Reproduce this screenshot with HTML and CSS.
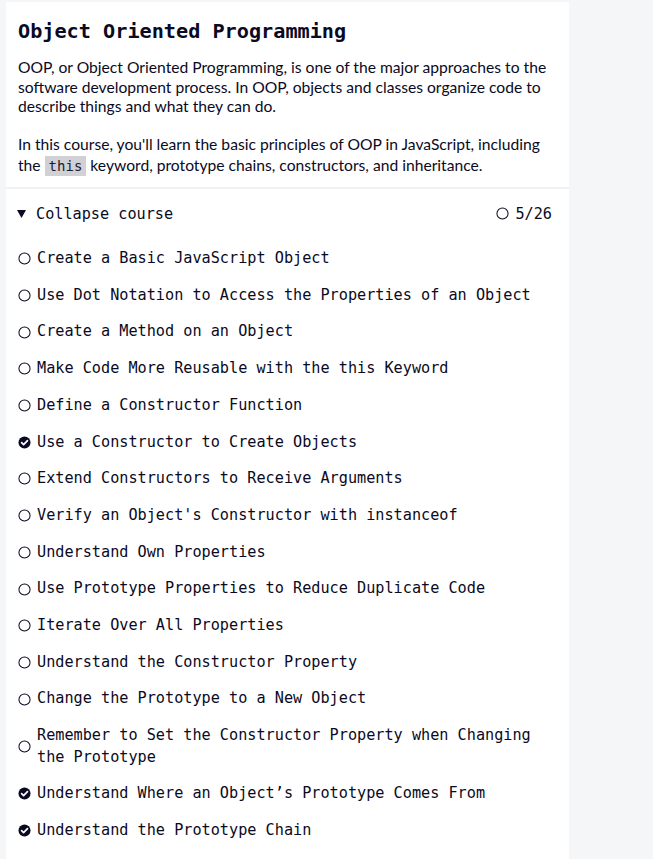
FILE: index.html
```html
<!DOCTYPE html>
<html lang="en">
<head>
<meta charset="utf-8">
<title>Object Oriented Programming</title>
<link rel="stylesheet" href="styles.css">
</head>
<body>
<div class="panel">
  <div class="intro">
    <h1 class="title">Object Oriented Programming</h1>
    <p class="desc">OOP, or Object Oriented Programming, is one of the major approaches to the software development process. In OOP, objects and classes organize code to describe things and what they can do.</p>
    <p class="desc desc-code">In this course, you'll learn the basic principles of OOP in JavaScript, including the <code class="kw">this</code> keyword, prototype chains, constructors, and inheritance.</p>
  </div>
  <div class="divider"></div>
  <div class="collapse-row">
    <span class="collapse-label"><svg class="tri" viewBox="0 0 9 8"><path d="M0 0 H9 L4.5 8 Z" fill="#0a0a23"/></svg>Collapse course</span>
    <span class="progress"><svg class="ico" viewBox="0 0 14 14"><circle cx="7" cy="7" r="6" fill="none" stroke="#0a0a23" stroke-width="1.1"/></svg> 5/26</span>
  </div>
  <ul class="steps">
    <li class="step"><svg class="ico" viewBox="0 0 14 14"><circle cx="7" cy="7" r="6" fill="none" stroke="#0a0a23" stroke-width="1.1"/></svg><span>Create a Basic JavaScript Object</span></li>
    <li class="step"><svg class="ico" viewBox="0 0 14 14"><circle cx="7" cy="7" r="6" fill="none" stroke="#0a0a23" stroke-width="1.1"/></svg><span>Use Dot Notation to Access the Properties of an Object</span></li>
    <li class="step"><svg class="ico" viewBox="0 0 14 14"><circle cx="7" cy="7" r="6" fill="none" stroke="#0a0a23" stroke-width="1.1"/></svg><span>Create a Method on an Object</span></li>
    <li class="step"><svg class="ico" viewBox="0 0 14 14"><circle cx="7" cy="7" r="6" fill="none" stroke="#0a0a23" stroke-width="1.1"/></svg><span>Make Code More Reusable with the this Keyword</span></li>
    <li class="step"><svg class="ico" viewBox="0 0 14 14"><circle cx="7" cy="7" r="6" fill="none" stroke="#0a0a23" stroke-width="1.1"/></svg><span>Define a Constructor Function</span></li>
    <li class="step"><svg class="ico" viewBox="0 0 14 14"><circle cx="7" cy="7" r="6.5" fill="#0a0a23"/><path d="M3.9 7.2 L6 9.2 L10.2 4.9" fill="none" stroke="#fff" stroke-width="1.8" stroke-linecap="round" stroke-linejoin="round"/></svg><span>Use a Constructor to Create Objects</span></li>
    <li class="step"><svg class="ico" viewBox="0 0 14 14"><circle cx="7" cy="7" r="6" fill="none" stroke="#0a0a23" stroke-width="1.1"/></svg><span>Extend Constructors to Receive Arguments</span></li>
    <li class="step"><svg class="ico" viewBox="0 0 14 14"><circle cx="7" cy="7" r="6" fill="none" stroke="#0a0a23" stroke-width="1.1"/></svg><span>Verify an Object's Constructor with instanceof</span></li>
    <li class="step"><svg class="ico" viewBox="0 0 14 14"><circle cx="7" cy="7" r="6" fill="none" stroke="#0a0a23" stroke-width="1.1"/></svg><span>Understand Own Properties</span></li>
    <li class="step"><svg class="ico" viewBox="0 0 14 14"><circle cx="7" cy="7" r="6" fill="none" stroke="#0a0a23" stroke-width="1.1"/></svg><span>Use Prototype Properties to Reduce Duplicate Code</span></li>
    <li class="step"><svg class="ico" viewBox="0 0 14 14"><circle cx="7" cy="7" r="6" fill="none" stroke="#0a0a23" stroke-width="1.1"/></svg><span>Iterate Over All Properties</span></li>
    <li class="step"><svg class="ico" viewBox="0 0 14 14"><circle cx="7" cy="7" r="6" fill="none" stroke="#0a0a23" stroke-width="1.1"/></svg><span>Understand the Constructor Property</span></li>
    <li class="step"><svg class="ico" viewBox="0 0 14 14"><circle cx="7" cy="7" r="6" fill="none" stroke="#0a0a23" stroke-width="1.1"/></svg><span>Change the Prototype to a New Object</span></li>
    <li class="step"><svg class="ico" viewBox="0 0 14 14"><circle cx="7" cy="7" r="6" fill="none" stroke="#0a0a23" stroke-width="1.1"/></svg><span>Remember to Set the Constructor Property when Changing the Prototype</span></li>
    <li class="step"><svg class="ico" viewBox="0 0 14 14"><circle cx="7" cy="7" r="6.5" fill="#0a0a23"/><path d="M3.9 7.2 L6 9.2 L10.2 4.9" fill="none" stroke="#fff" stroke-width="1.8" stroke-linecap="round" stroke-linejoin="round"/></svg><span>Understand Where an Object’s Prototype Comes From</span></li>
    <li class="step"><svg class="ico" viewBox="0 0 14 14"><circle cx="7" cy="7" r="6.5" fill="#0a0a23"/><path d="M3.9 7.2 L6 9.2 L10.2 4.9" fill="none" stroke="#fff" stroke-width="1.8" stroke-linecap="round" stroke-linejoin="round"/></svg><span>Understand the Prototype Chain</span></li>
  </ul>
</div>
</body>
</html>
```
FILE: styles.css
```css
html, body {
  margin: 0;
  padding: 0;
}
body {
  background: #f5f6f7;
  color: #0a0a23;
  font-family: Lato, "Noto Sans", sans-serif;
}
.panel {
  background: #fff;
  width: 563px;
  margin: 2px 0 0 6px;
  min-height: 857px;
}
.intro {
  padding: 16px 12px 10px 12px;
}
.title {
  font-family: "DejaVu Sans Mono", monospace;
  font-weight: 700;
  font-size: 20.2px;
  line-height: 26px;
  margin: 0 0 14px 0;
}
.desc {
  font-size: 15.65px;
  line-height: 19.5px;
  margin: 0 0 17px 0;
}
.desc-code {
  line-height: 21px;
}
.desc:last-child {
  margin-bottom: 0;
}
.kw {
  font-family: "DejaVu Sans Mono", monospace;
  font-size: 14px;
  background: #d0d0d5;
  padding: 2px 4px;
  color: #1b1b32;
}
.divider {
  height: 2px;
  background: #f0f1f3;
}
.collapse-row {
  display: flex;
  justify-content: space-between;
  align-items: center;
  padding: 14px 17px 10px 11px;
  font-family: "DejaVu Sans Mono", monospace;
  font-size: 15.2px;
  line-height: 22px;
}
.collapse-label {
  display: flex;
  align-items: center;
  gap: 10px;
}
.tri {
  width: 9px;
  height: 8px;
  flex: none;
}
.progress {
  display: flex;
  align-items: center;
  gap: 6px;
}
.ico {
  width: 13px;
  height: 13px;
  flex: none;
}
.steps {
  list-style: none;
  margin: 6px 0 0 0;
  padding: 0 24px 0 12px;
}
.step {
  display: flex;
  align-items: center;
  gap: 6px;
  padding: 7.6px 0;
  font-family: "DejaVu Sans Mono", monospace;
  font-size: 15.2px;
  line-height: 21.5px;
}
```
